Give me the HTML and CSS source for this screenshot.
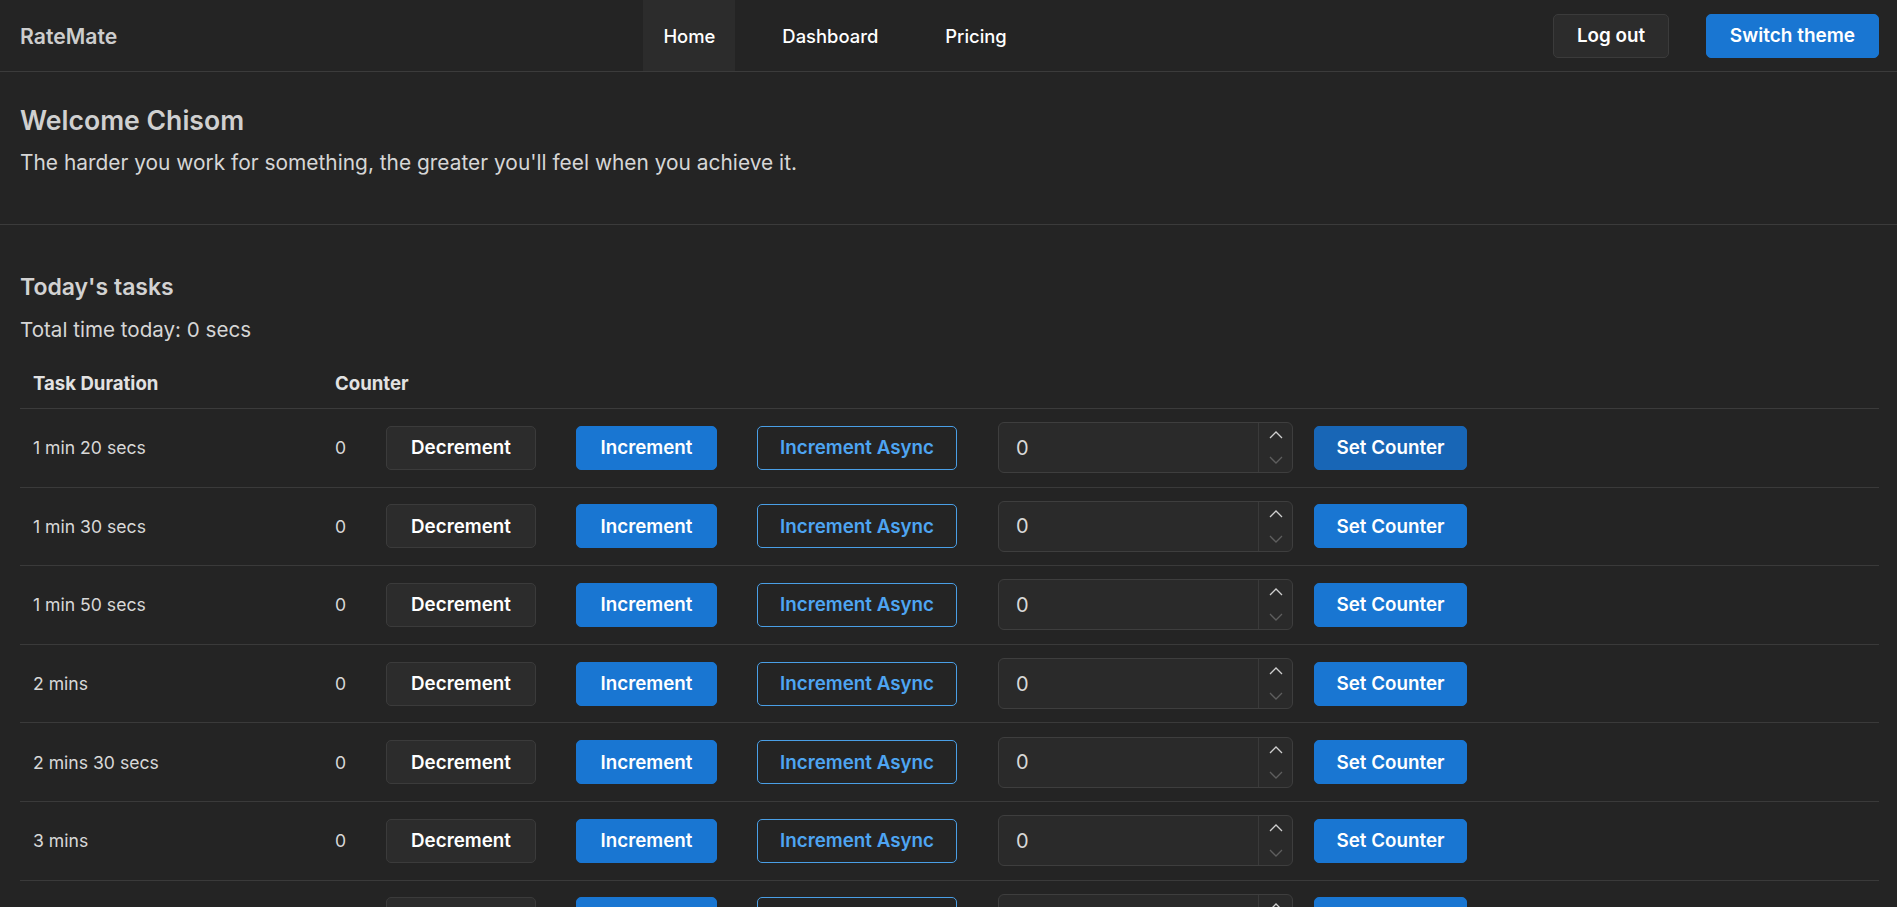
FILE: index.html
```html
<!DOCTYPE html>
<html lang="en">
<head>
<meta charset="utf-8">
<title>RateMate</title>
<link rel="stylesheet" href="styles.css">
</head>
<body>
<header class="topbar">
  <div class="logo">RateMate</div>
  <nav class="menu">
    <a class="menu-item active">Home</a>
    <a class="menu-item">Dashboard</a>
    <a class="menu-item">Pricing</a>
  </nav>
  <div class="actions">
    <button class="btn btn-dark btn-logout">Log out</button>
    <button class="btn btn-blue btn-theme">Switch theme</button>
  </div>
</header>

<section class="welcome">
  <h1 class="welcome-title">Welcome Chisom</h1>
  <p class="welcome-quote">The harder you work for something, the greater you'll feel when you achieve it.</p>
</section>

<section class="tasks">
  <h2 class="tasks-title">Today's tasks</h2>
  <p class="tasks-total">Total time today: 0 secs</p>
  <table class="task-table">
    <thead>
      <tr><th class="col-dur">Task Duration</th><th>Counter</th></tr>
    </thead>
    <tbody id="rows"></tbody>
  </table>
</section>
<script src="script.js"></script>
</body>
</html>
```

FILE: styles.css
```css
:root {
  --font: "Inter", "Open Sans", sans-serif;
}
* { box-sizing: border-box; }
html, body { margin: 0; padding: 0; }
body {
  background: #242424;
  color: #d6d6d6;
  font-family: var(--font);
}
.topbar {
  height: 72px;
  border-bottom: 1px solid #3b3b3b;
  display: flex;
  align-items: center;
  justify-content: space-between;
  padding: 0 18px 0 20px;
}
.logo { font-size: 21.2px; font-weight: 600; color: #cdcdcd; }
.menu { display: flex; align-self: stretch; gap: 27px; }
.menu-item {
  display: flex; align-items: center;
  padding: 0 20px;
  font-size: 18.4px; font-weight: 500; color: #fff;
}
.menu-item.active { background: #2c2c2c; }
.actions { display: flex; gap: 37px; }
.btn {
  height: 44px;
  border-radius: 5px;
  font-family: var(--font);
  font-size: 18.8px; font-weight: 600;
  color: #fff;
  border: 1px solid transparent;
  padding: 0;
  display: inline-flex; align-items: center; justify-content: center;
}
.btn-dark { background: #2c2c2c; border-color: #3b3b3b; }
.btn-blue { background: #1976d2; border-color: #1976d2; }
.btn-blue.hover { background: #1866b6; border-color: #1866b6; }
.btn-outline { background: transparent; border-color: #4a9fe6; color: #4ea5f2; }
.btn-logout { width: 116px; }
.btn-theme { width: 173px; font-size: 19px; }

.welcome {
  padding: 33px 18px 48px 20px;
  border-bottom: 1px solid #3b3b3b;
}
.welcome-title { margin: 0; font-size: 26.6px; line-height: 30px; font-weight: 600; color: #d0d0d0; }
.welcome-quote { margin: 15px 0 0; font-size: 20.9px; line-height: 26px; color: #d6d6d6; }

.tasks { padding: 48px 18px 0 20px; }
.tasks-title { margin: 0; font-size: 23px; line-height: 28px; font-weight: 600; color: #d2d2d2; }
.tasks-total { margin: 17px 0 0; font-size: 20.6px; line-height: 24px; color: #d6d6d6; }
.task-table { width: 100%; border-collapse: collapse; margin-top: 16px; }
.task-table th {
  text-align: left; font-size: 18.6px; font-weight: 700; color: #e2e2e2;
  line-height: 22px; padding: 14px 13px 14px;
  border-bottom: 1px solid #3b3b3b;
}
.col-dur { width: 302px; }
.task-table td {
  padding: 13.3px 13px;
  border-bottom: 1px solid #3a3a3a;
  font-size: 17.6px; color: #d8d8d8;
  vertical-align: middle;
}
.ctrl { display: flex; align-items: center; }
.count { width: 51px; }
.btn-dec { width: 150px; }
.btn-inc { width: 141px; margin-left: 40px; }
.btn-async { width: 200px; margin-left: 40px; }
.num {
  margin-left: 41px;
  width: 295px; height: 51px;
  background: #2a2a2a;
  border: 1px solid #3e3e3e;
  border-radius: 6px;
  display: flex; align-items: stretch;
}
.num-val { flex: 1; display: flex; align-items: center; padding-left: 17px; font-size: 20px; color: #d8d8d8; }
.spin {
  width: 34px; border-left: 1px solid #3a3a3a;
  display: flex; flex-direction: column; align-items: center; justify-content: space-between;
  padding: 8px 0 8px;
}
.btn-set { width: 153px; margin-left: 21px; }
```

FILE: script.js
```js
var durs = ["1 min 20 secs","1 min 30 secs","1 min 50 secs","2 mins","2 mins 30 secs","3 mins","3 mins 30 secs","4 mins"];
var up = '<svg width="14" height="8" viewBox="0 0 14 8"><path d="M1 7 L7 1 L13 7" fill="none" stroke="#cfcfcf" stroke-width="1.3"/></svg>';
var dn = '<svg width="14" height="8" viewBox="0 0 14 8"><path d="M1 1 L7 7 L13 1" fill="none" stroke="#5e5e5e" stroke-width="1.3"/></svg>';
var html = "";
durs.forEach(function (d, i) {
  html += '<tr><td>' + d + '</td><td><div class="ctrl"><span class="count">0</span>' +
    '<button class="btn btn-dark btn-dec">Decrement</button>' +
    '<button class="btn btn-blue btn-inc">Increment</button>' +
    '<button class="btn btn-outline btn-async">Increment Async</button>' +
    '<div class="num"><span class="num-val">0</span><span class="spin">' + up + dn + '</span></div>' +
    '<button class="btn btn-blue btn-set' + (i === 0 ? ' hover' : '') + '">Set Counter</button>' +
    '</div></td></tr>';
});
document.getElementById("rows").innerHTML = html;
```
